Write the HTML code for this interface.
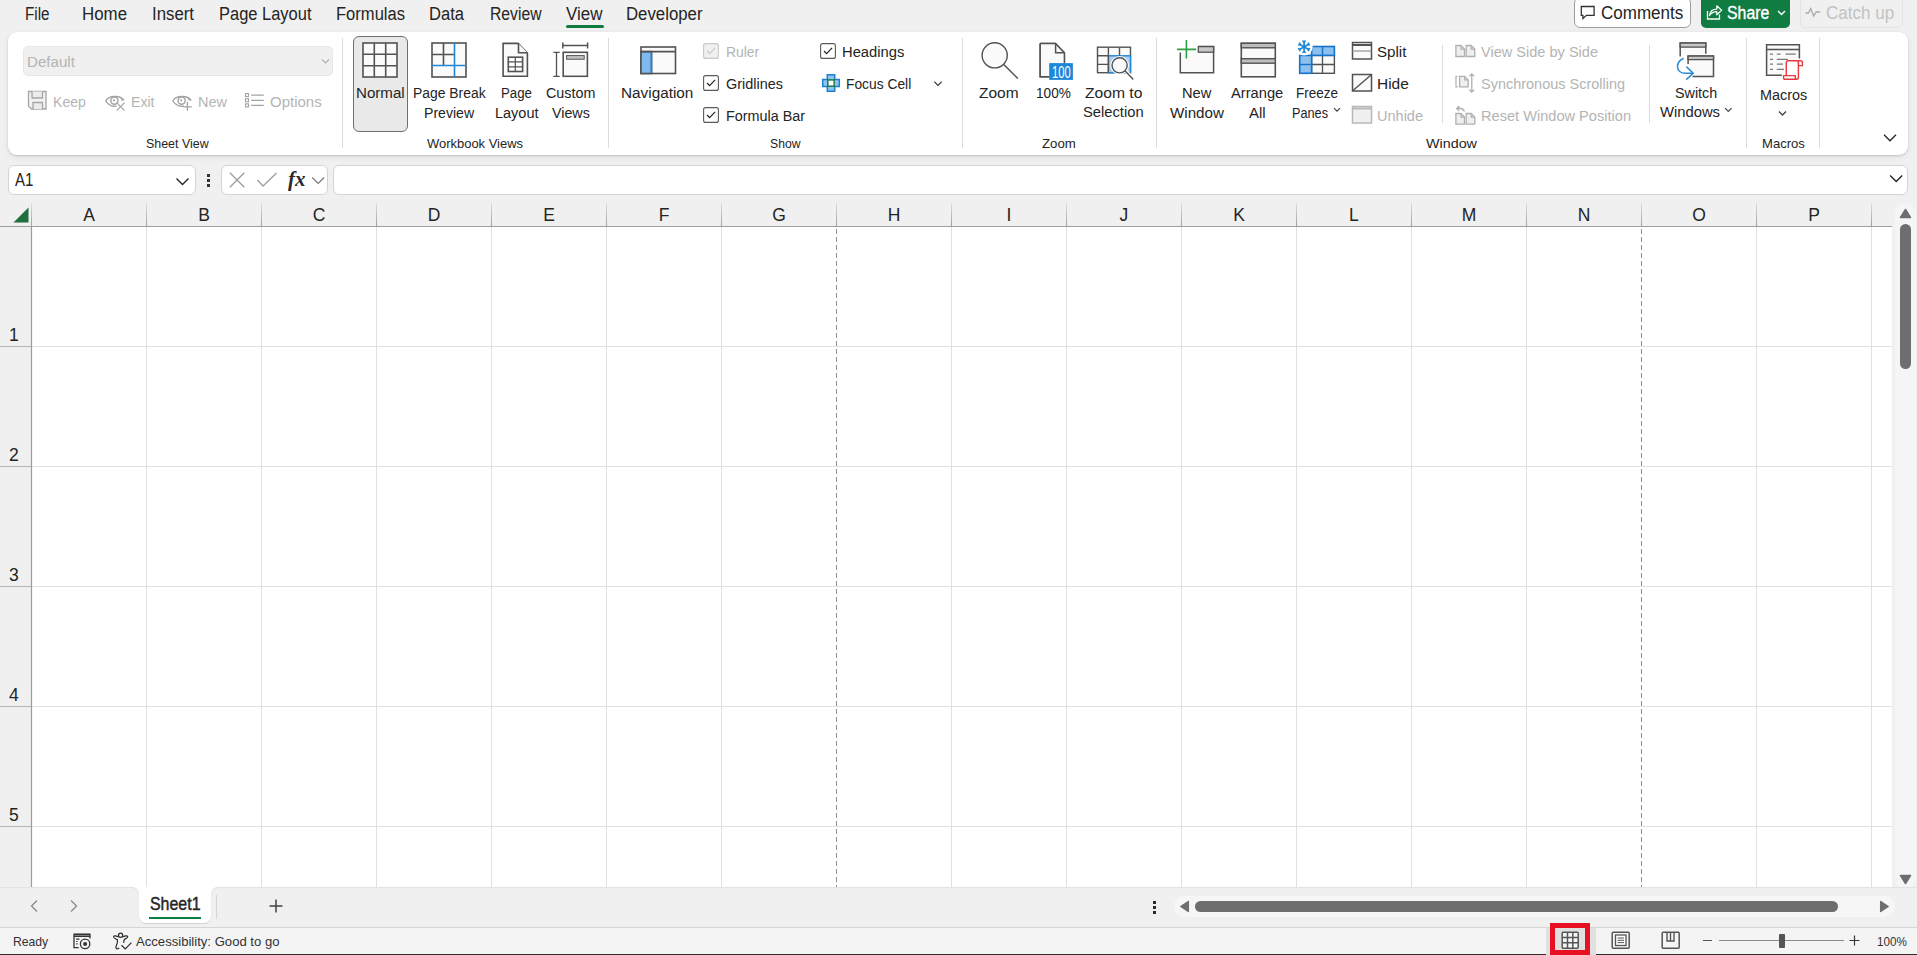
<!DOCTYPE html>
<html><head><meta charset="utf-8"><style>
html,body{margin:0;padding:0}
body{width:1917px;height:955px;overflow:hidden;position:relative;background:#f0f0f0;font-family:"Liberation Sans",sans-serif}
.t{position:absolute;white-space:nowrap;line-height:1}
svg{overflow:visible}
</style></head><body>
<div class="t" style="left:25.00px;top:5px;font-size:18px;color:#242424;font-weight:400;transform:scaleX(0.8448);transform-origin:0 0;">File</div>
<div class="t" style="left:82.40px;top:5px;font-size:18px;color:#242424;font-weight:400;transform:scaleX(0.9375);transform-origin:0 0;">Home</div>
<div class="t" style="left:152.00px;top:5px;font-size:18px;color:#242424;font-weight:400;transform:scaleX(0.9333);transform-origin:0 0;">Insert</div>
<div class="t" style="left:219.00px;top:5px;font-size:18px;color:#242424;font-weight:400;transform:scaleX(0.9149);transform-origin:0 0;">Page Layout</div>
<div class="t" style="left:336.00px;top:5px;font-size:18px;color:#242424;font-weight:400;transform:scaleX(0.9200);transform-origin:0 0;">Formulas</div>
<div class="t" style="left:429.00px;top:5px;font-size:18px;color:#242424;font-weight:400;transform:scaleX(0.9198);transform-origin:0 0;">Data</div>
<div class="t" style="left:489.50px;top:5px;font-size:18px;color:#242424;font-weight:400;transform:scaleX(0.8721);transform-origin:0 0;">Review</div>
<div class="t" style="left:566.00px;top:5px;font-size:18px;color:#242424;font-weight:400;transform:scaleX(0.9419);transform-origin:0 0;">View</div>
<div class="t" style="left:626.00px;top:5px;font-size:18px;color:#242424;font-weight:400;transform:scaleX(0.9324);transform-origin:0 0;">Developer</div>
<div style="position:absolute;left:566px;top:25px;width:38px;height:3px;background:#107c41;border-radius:2px"></div>
<div style="position:absolute;left:1574px;top:-3px;width:117px;height:31px;background:#fff;border:1px solid #9e9e9e;border-radius:6px;box-sizing:border-box"></div>
<svg style="position:absolute;left:1580px;top:5px;" width="16" height="15" viewBox="0 0 16 15"><path d="M1.3 1.5h12.8v8.8h-7.6l-3.6 3.2v-3.2h-1.6z" fill="none" stroke="#333" stroke-width="1.3" stroke-linejoin="miter"/></svg>
<div class="t" style="left:1600.60px;top:5px;font-size:17.5px;color:#242424;font-weight:400;transform:scaleX(0.9728);transform-origin:0 0;">Comments</div>
<div style="position:absolute;left:1701px;top:-6px;width:89px;height:33.6px;background:#107c41;border-radius:5px"></div>
<svg style="position:absolute;left:1706px;top:4px;" width="18" height="18" viewBox="0 0 18 18"><path d="M1.5 7v8h12V10.5" fill="none" stroke="#fff" stroke-width="1.3"/><path d="M3.5 11.5C4 7 7 5.2 10.8 5.2V1.8L15.6 6.3 10.8 10.8V7.6C7.6 7.6 5.2 9 3.5 11.5z" fill="none" stroke="#fff" stroke-width="1.2" stroke-linejoin="round"/></svg>
<div class="t" style="left:1727.20px;top:5px;font-size:17.5px;color:#ffffff;font-weight:400;transform:scaleX(0.9058);transform-origin:0 0;-webkit-text-stroke:0.35px #fff;">Share</div>
<svg style="position:absolute;left:1777px;top:10px;" width="9" height="6" viewBox="0 0 9 6"><path d="M1 1l3.5 3.5L8 1" fill="none" stroke="#fff" stroke-width="1.4"/></svg>
<div style="position:absolute;left:1800px;top:-6px;width:103px;height:33.6px;background:#f0f0f0;border:1px solid #e3e3e3;border-radius:5px;box-sizing:border-box"></div>
<svg style="position:absolute;left:1805px;top:7px;" width="16" height="11" viewBox="0 0 16 11"><path d="M0.5 6h3l2.2-4.5 3 7.5 2.5-4h4" fill="none" stroke="#a8a8a8" stroke-width="1.3"/></svg>
<div class="t" style="left:1826.30px;top:5px;font-size:17.5px;color:#c2c2c2;font-weight:400;transform:scaleX(0.9750);transform-origin:0 0;">Catch up</div>
<div style="position:absolute;left:8px;top:32px;width:1900px;height:123px;background:#fff;border-radius:9px;box-shadow:0 1px 2px rgba(0,0,0,0.14),0 2px 6px rgba(0,0,0,0.07)"></div>
<div style="position:absolute;left:342px;top:38px;width:1px;height:110px;background:#dcdcdc"></div>
<div style="position:absolute;left:608px;top:38px;width:1px;height:110px;background:#dcdcdc"></div>
<div style="position:absolute;left:962px;top:38px;width:1px;height:110px;background:#dcdcdc"></div>
<div style="position:absolute;left:1156px;top:38px;width:1px;height:110px;background:#dcdcdc"></div>
<div style="position:absolute;left:1746px;top:38px;width:1px;height:110px;background:#dcdcdc"></div>
<div style="position:absolute;left:1819px;top:38px;width:1px;height:110px;background:#dcdcdc"></div>
<div style="position:absolute;left:1442px;top:45px;width:1px;height:78px;background:#dcdcdc"></div>
<div style="position:absolute;left:1649px;top:45px;width:1px;height:78px;background:#dcdcdc"></div>
<div class="t" style="left:146.05px;top:137px;font-size:13.5px;color:#242424;font-weight:400;transform:scaleX(0.9207);transform-origin:0 0;">Sheet View</div>
<div class="t" style="left:427.40px;top:137px;font-size:13.5px;color:#242424;font-weight:400;transform:scaleX(0.9595);transform-origin:0 0;">Workbook Views</div>
<div class="t" style="left:770.25px;top:137px;font-size:13.5px;color:#242424;font-weight:400;transform:scaleX(0.9024);transform-origin:0 0;">Show</div>
<div class="t" style="left:1041.70px;top:137px;font-size:13.5px;color:#242424;font-weight:400;transform:scaleX(0.9797);transform-origin:0 0;">Zoom</div>
<div class="t" style="left:1425.50px;top:137px;font-size:13.5px;color:#242424;font-weight:400;transform:scaleX(1.0614);transform-origin:0 0;">Window</div>
<div class="t" style="left:1761.70px;top:137px;font-size:13.5px;color:#242424;font-weight:400;transform:scaleX(0.9672);transform-origin:0 0;">Macros</div>
<div style="position:absolute;left:23px;top:46px;width:310px;height:30px;background:#f0f0f0;border:1px solid #e6e6e6;border-radius:5px;box-sizing:border-box"></div>
<div class="t" style="left:27.00px;top:54px;font-size:15.5px;color:#b4b4b4;font-weight:400;transform:scaleX(0.9756);transform-origin:0 0;">Default</div>
<svg style="position:absolute;left:321px;top:58px;" width="9" height="7" viewBox="0 0 9 7"><path d="M1 1.5l3.5 3.5L8 1.5" fill="none" stroke="#b0b0b0" stroke-width="1.2"/></svg>
<svg style="position:absolute;left:27px;top:90px;" width="22" height="22" viewBox="0 0 22 22"><path d="M1.5 1.5h17.5v17.5h-14.5l-3-3z" fill="#f3f3f3" stroke="#a6a6a6" stroke-width="1.3"/><path d="M5 1.5v6.5h10.5V1.5" fill="#ececec" stroke="#a6a6a6" stroke-width="1.3"/><path d="M6 19V12.5h9.5V19" fill="#ececec" stroke="#a6a6a6" stroke-width="1.3"/></svg>
<div class="t" style="left:53.30px;top:94px;font-size:15.5px;color:#b4b4b4;font-weight:400;transform:scaleX(0.9088);transform-origin:0 0;">Keep</div>
<svg style="position:absolute;left:0;top:0;overflow:visible" width="1" height="1"><g transform="translate(0,0)"><path d="M105.6 101C109 95.3 120.5 95 124 100.5" fill="none" stroke="#a3a3a3" stroke-width="1.4"/><path d="M105.6 101C108.5 105.8 113.5 106.8 116.5 106" fill="none" stroke="#a3a3a3" stroke-width="1.4"/><circle cx="114.4" cy="100.6" r="3.6" fill="none" stroke="#a3a3a3" stroke-width="1.4"/><circle cx="114" cy="100.3" r="1.1" fill="#a3a3a3"/><path d="M121.3 97.6l0.8 3" stroke="#a3a3a3" stroke-width="1.2"/></g><path d="M116.6 102.6l8 8M124.6 102.6l-8 8" stroke="#a3a3a3" stroke-width="1.2"/></svg>
<div class="t" style="left:130.50px;top:94px;font-size:15.5px;color:#b4b4b4;font-weight:400;transform:scaleX(0.9091);transform-origin:0 0;">Exit</div>
<svg style="position:absolute;left:0;top:0;overflow:visible" width="1" height="1"><g transform="translate(67.2,0)"><path d="M105.6 101C109 95.3 120.5 95 124 100.5" fill="none" stroke="#a3a3a3" stroke-width="1.4"/><path d="M105.6 101C108.5 105.8 113.5 106.8 116.5 106" fill="none" stroke="#a3a3a3" stroke-width="1.4"/><circle cx="114.4" cy="100.6" r="3.6" fill="none" stroke="#a3a3a3" stroke-width="1.4"/><circle cx="114" cy="100.3" r="1.1" fill="#a3a3a3"/><path d="M121.3 97.6l0.8 3" stroke="#a3a3a3" stroke-width="1.2"/></g><path d="M187.4 102v8.8M183.2 106.8h8.6" stroke="#a3a3a3" stroke-width="1.3"/></svg>
<div class="t" style="left:197.50px;top:94px;font-size:15.5px;color:#b4b4b4;font-weight:400;transform:scaleX(0.9308);transform-origin:0 0;">New</div>
<svg style="position:absolute;left:0;top:0;overflow:visible" width="1" height="1"><rect x="245.5" y="93.6" width="3" height="3" fill="none" stroke="#a3a3a3" stroke-width="1.1"/><rect x="245.5" y="98.8" width="3" height="3" fill="none" stroke="#a3a3a3" stroke-width="1.1"/><rect x="245.5" y="103.9" width="3" height="3" fill="none" stroke="#a3a3a3" stroke-width="1.1"/><path d="M251.2 95.1h12.6M251.2 100.3h12.6M251.2 105.4h12.6" stroke="#a3a3a3" stroke-width="1.2"/></svg>
<div class="t" style="left:270.00px;top:94px;font-size:15.5px;color:#b4b4b4;font-weight:400;transform:scaleX(0.9682);transform-origin:0 0;">Options</div>
<div style="position:absolute;left:353px;top:36px;width:55px;height:96px;background:#e9e9e9;border:1px solid #6e6e6e;border-radius:6px;box-sizing:border-box"></div>
<svg style="position:absolute;left:360px;top:40px;" width="40" height="40" viewBox="0 0 40 40"><rect x="3" y="3" width="34" height="34" fill="#fafafa" stroke="#525252" stroke-width="1.6"/><path d="M14.3 3V37M3 14.3H37" stroke="#525252" stroke-width="1.6"/><path d="M25.7 3V37M3 25.7H37" stroke="#525252" stroke-width="1.6"/></svg>
<div class="t" style="left:355.65px;top:85px;font-size:15.5px;color:#242424;font-weight:400;transform:scaleX(0.9750);transform-origin:0 0;">Normal</div>
<svg style="position:absolute;left:429px;top:40px;" width="40" height="40" viewBox="0 0 40 40"><rect x="3" y="3" width="34" height="34" fill="#fafafa" stroke="#525252" stroke-width="1.6"/><path d="M14.5 3V25.5M3 14.5H25.5" stroke="#525252" stroke-width="1.6"/><path d="M25.5 3V37M3 25.5H37" stroke="#1f87d6" stroke-width="1.6"/></svg>
<div class="t" style="left:412.65px;top:85px;font-size:15.5px;color:#242424;font-weight:400;transform:scaleX(0.8970);transform-origin:0 0;">Page Break</div>
<div class="t" style="left:423.90px;top:105px;font-size:15.5px;color:#242424;font-weight:400;transform:scaleX(0.9094);transform-origin:0 0;">Preview</div>
<svg style="position:absolute;left:0;top:0;overflow:visible" width="1" height="1"><path d="M503.1 43.4h15l9.3 9.6v23.2H503.1z" fill="#fafafa" stroke="#525252" stroke-width="1.6" stroke-linejoin="miter"/><path d="M518.5 43.4v9.4h8.9" fill="#fafafa" stroke="#525252" stroke-width="1.6"/><rect x="508.3" y="57.2" width="14.3" height="14.3" fill="#fff" stroke="#525252" stroke-width="1.6"/><path d="M515.3 57.2V71.5M508.3 61.9H522.6M508.3 66.8H522.6" stroke="#525252" stroke-width="1.2"/></svg>
<div class="t" style="left:500.55px;top:85px;font-size:15.5px;color:#242424;font-weight:400;transform:scaleX(0.8536);transform-origin:0 0;">Page</div>
<div class="t" style="left:494.55px;top:105px;font-size:15.5px;color:#242424;font-weight:400;transform:scaleX(0.9345);transform-origin:0 0;">Layout</div>
<svg style="position:absolute;left:0;top:0;overflow:visible" width="1" height="1"><path d="M562.8 45.6H587.6M562.8 42.4v6.2M587.6 42.4v6.2" stroke="#525252" stroke-width="1.5"/><path d="M553.4 52.3h6.3M553.4 76.3h6.3M556.5 52.3V76.3" stroke="#525252" stroke-width="1.3"/><rect x="563.2" y="52.3" width="24.2" height="24" fill="#fafafa" stroke="#525252" stroke-width="1.6"/><rect x="566.6" y="55.6" width="17.6" height="3.6" fill="#c4c4c4" stroke="#525252" stroke-width="1"/></svg>
<div class="t" style="left:546.35px;top:85px;font-size:15.5px;color:#242424;font-weight:400;transform:scaleX(0.9232);transform-origin:0 0;">Custom</div>
<div class="t" style="left:552.10px;top:105px;font-size:15.5px;color:#242424;font-weight:400;transform:scaleX(0.9208);transform-origin:0 0;">Views</div>
<svg style="position:absolute;left:638px;top:44px;" width="40" height="32" viewBox="0 0 40 32"><rect x="3" y="3" width="34.5" height="26.5" fill="#fafafa" stroke="#525252" stroke-width="1.6"/><rect x="3" y="7.6" width="10.5" height="21.9" fill="#7fbaf0" stroke="#525252" stroke-width="1.6"/><path d="M13.5 8.5V29" stroke="#1f87d6" stroke-width="1.6"/><path d="M3 7.6h34.5" stroke="#525252" stroke-width="1.6"/></svg>
<div class="t" style="left:621.20px;top:85px;font-size:15.5px;color:#242424;font-weight:400;transform:scaleX(0.9884);transform-origin:0 0;">Navigation</div>
<svg style="position:absolute;left:703px;top:42.8px;" width="16" height="16" viewBox="0 0 16 16"><rect x="0.6" y="0.6" width="14.8" height="14.8" rx="2" fill="#f0f0f0" stroke="#c8c8c8" stroke-width="1.1"/><path d="M4 8l2.6 2.6 5.5-5.8" fill="none" stroke="#c8c8c8" stroke-width="1.2"/></svg>
<div class="t" style="left:725.50px;top:44px;font-size:15.5px;color:#b4b4b4;font-weight:400;transform:scaleX(0.8961);transform-origin:0 0;">Ruler</div>
<svg style="position:absolute;left:703px;top:75.4px;" width="16" height="16" viewBox="0 0 16 16"><rect x="0.6" y="0.6" width="14.8" height="14.8" rx="2" fill="#fff" stroke="#5a5a5a" stroke-width="1.1"/><path d="M4 8l2.6 2.6 5.5-5.8" fill="none" stroke="#242424" stroke-width="1.2"/></svg>
<div class="t" style="left:725.50px;top:76px;font-size:15.5px;color:#242424;font-weight:400;transform:scaleX(0.9305);transform-origin:0 0;">Gridlines</div>
<svg style="position:absolute;left:703px;top:107.2px;" width="16" height="16" viewBox="0 0 16 16"><rect x="0.6" y="0.6" width="14.8" height="14.8" rx="2" fill="#fff" stroke="#5a5a5a" stroke-width="1.1"/><path d="M4 8l2.6 2.6 5.5-5.8" fill="none" stroke="#242424" stroke-width="1.2"/></svg>
<div class="t" style="left:725.50px;top:108px;font-size:15.5px;color:#242424;font-weight:400;transform:scaleX(0.9279);transform-origin:0 0;">Formula Bar</div>
<svg style="position:absolute;left:820px;top:42.8px;" width="16" height="16" viewBox="0 0 16 16"><rect x="0.6" y="0.6" width="14.8" height="14.8" rx="2" fill="#fff" stroke="#5a5a5a" stroke-width="1.1"/><path d="M4 8l2.6 2.6 5.5-5.8" fill="none" stroke="#242424" stroke-width="1.2"/></svg>
<div class="t" style="left:842.30px;top:44px;font-size:15.5px;color:#242424;font-weight:400;transform:scaleX(0.9511);transform-origin:0 0;">Headings</div>
<svg style="position:absolute;left:0;top:0;overflow:visible" width="1" height="1"><path d="M827.3 74.7H834.7V79.4H839.3V86.6H834.7V91.3H827.3V86.6H822.7V79.4H827.3Z" fill="#8fc3f0" stroke="#1f7fd0" stroke-width="1.5" stroke-linejoin="miter"/><rect x="827.8" y="79.9" width="6.4" height="6.3" fill="#fff" stroke="#1e7b45" stroke-width="1.5"/></svg>
<div class="t" style="left:846.00px;top:76px;font-size:15.5px;color:#242424;font-weight:400;transform:scaleX(0.8907);transform-origin:0 0;">Focus Cell</div>
<svg style="position:absolute;left:933px;top:80px;" width="10" height="7" viewBox="0 0 10 7"><path d="M1.3 1.6l3.7 3.7 3.7-3.7" fill="none" stroke="#333" stroke-width="1.2"/></svg>
<svg style="position:absolute;left:0;top:0;overflow:visible" width="1" height="1"><circle cx="994.7" cy="55.3" r="12.6" fill="#fafafa" stroke="#525252" stroke-width="1.4"/><path d="M1003.8 64.5L1017.8 78.5" stroke="#525252" stroke-width="1.5"/></svg>
<div class="t" style="left:978.95px;top:85px;font-size:15.5px;color:#242424;font-weight:400;transform:scaleX(0.9975);transform-origin:0 0;">Zoom</div>
<svg style="position:absolute;left:0;top:0;overflow:visible" width="1" height="1"><path d="M1040.2 43.4h15.2l9 9.4v10.5M1049.2 76.7h-9V43.4" fill="#fafafa" stroke="#525252" stroke-width="1.5"/><path d="M1040.2 43.4h15.2l9 9.4V63.2H1049.2V76.7h-9z" fill="#fafafa"/><path d="M1040.2 43.4h15.2l9 9.4v10.5M1049.2 76.7h-9V43.4" fill="none" stroke="#525252" stroke-width="1.5"/><path d="M1055.6 43.4v9.4h8.8" fill="none" stroke="#525252" stroke-width="1.5"/><rect x="1049.2" y="63.1" width="23.7" height="16.8" fill="#1e88d8"/><text x="1052" y="77.7" font-family="Liberation Sans" font-size="16.5" fill="#fff" textLength="18.7" lengthAdjust="spacingAndGlyphs">100</text></svg>
<div class="t" style="left:1036.20px;top:85px;font-size:15.5px;color:#242424;font-weight:400;transform:scaleX(0.8777);transform-origin:0 0;">100%</div>
<svg style="position:absolute;left:0;top:0;overflow:visible" width="1" height="1"><rect x="1097.5" y="47.2" width="33" height="25.5" fill="#fafafa" stroke="#525252" stroke-width="1.4"/><rect x="1108.4" y="55.8" width="22.1" height="16.9" fill="#a9d1f5" stroke="#1f87d6" stroke-width="1.4"/><path d="M1108.4 47.2v25.5M1119.5 47.2v8.6M1097.5 55.8h10.9M1097.5 64.4h10.9" stroke="#525252" stroke-width="1.4"/><circle cx="1119.6" cy="65.3" r="9.3" fill="#fff"/><path d="M1126 71.2l7.6 8.3" stroke="#fff" stroke-width="3.5"/><circle cx="1119.6" cy="65.3" r="7.6" fill="#fafafa" stroke="#525252" stroke-width="1.4"/><path d="M1125 70.8l8.3 8.7" stroke="#525252" stroke-width="1.4"/></svg>
<div class="t" style="left:1085.00px;top:85px;font-size:15.5px;color:#242424;font-weight:400;transform:scaleX(1.0097);transform-origin:0 0;">Zoom to</div>
<div class="t" style="left:1083.20px;top:104px;font-size:15.5px;color:#242424;font-weight:400;transform:scaleX(0.9506);transform-origin:0 0;">Selection</div>
<svg style="position:absolute;left:0;top:0;overflow:visible" width="1" height="1"><path d="M1180.3 52.4V72.7H1213.6V46.6H1198.3" fill="#fafafa" stroke="#525252" stroke-width="1.5"/><path d="M1180.3 52.4V46.6H1198.3" fill="none" stroke="none"/><rect x="1198.3" y="46.6" width="15.3" height="5.6" fill="#c8c8c8" stroke="#525252" stroke-width="1.3"/><path d="M1186.4 40.1v18.5M1177.1 49.4h18.9" stroke="#2ca046" stroke-width="1.6"/></svg>
<div class="t" style="left:1182.45px;top:85px;font-size:15.5px;color:#242424;font-weight:400;transform:scaleX(0.9436);transform-origin:0 0;">New</div>
<div class="t" style="left:1169.60px;top:105px;font-size:15.5px;color:#242424;font-weight:400;transform:scaleX(0.9783);transform-origin:0 0;">Window</div>
<svg style="position:absolute;left:1238px;top:40px;" width="40" height="40" viewBox="0 0 40 40"><rect x="3.3" y="3.3" width="34" height="33.5" fill="#fafafa" stroke="#525252" stroke-width="1.6"/><rect x="3.3" y="3.3" width="34" height="4.5" fill="#bdbdbd" stroke="#525252" stroke-width="1.4"/><path d="M3.3 18.7h34" stroke="#525252" stroke-width="1.6"/><rect x="3.3" y="18.7" width="34" height="4.5" fill="#bdbdbd" stroke="#525252" stroke-width="1.4"/></svg>
<div class="t" style="left:1231.05px;top:85px;font-size:15.5px;color:#242424;font-weight:400;transform:scaleX(0.9483);transform-origin:0 0;">Arrange</div>
<div class="t" style="left:1249.45px;top:105px;font-size:15.5px;color:#242424;font-weight:400;transform:scaleX(0.9681);transform-origin:0 0;">All</div>
<svg style="position:absolute;left:0;top:0;overflow:visible" width="1" height="1"><rect x="1311.6" y="55.4" width="22.8" height="17.9" fill="#fafafa" stroke="#525252" stroke-width="1.4"/><path d="M1322.5 55.4V73.3M1311.6 64.5H1334.4" stroke="#525252" stroke-width="1.3"/><rect x="1311.6" y="46.5" width="22.8" height="8.9" fill="#8cc0ee" stroke="#1474c8" stroke-width="1.6"/><path d="M1322.5 46.5V55.4" stroke="#1474c8" stroke-width="1.4"/><rect x="1299.7" y="55.4" width="11.9" height="17.9" fill="#8cc0ee" stroke="#1474c8" stroke-width="1.6"/><path d="M1299.7 64.5H1311.6" stroke="#1474c8" stroke-width="1.4"/><circle cx="1304.1" cy="46.8" r="8.6" fill="#fff"/><path d="M1304.10 40.50L1304.10 53.10" stroke="#1f87d6" stroke-width="1.7"/><path d="M1298.64 43.65L1309.56 49.95" stroke="#1f87d6" stroke-width="1.7"/><path d="M1309.56 43.65L1298.64 49.95" stroke="#1f87d6" stroke-width="1.7"/><path d="M1304.10 51.40L1305.79 52.81" stroke="#1f87d6" stroke-width="1.3"/><path d="M1304.10 51.40L1302.41 52.81" stroke="#1f87d6" stroke-width="1.3"/><path d="M1300.12 49.10L1299.73 51.27" stroke="#1f87d6" stroke-width="1.3"/><path d="M1300.12 49.10L1298.05 48.35" stroke="#1f87d6" stroke-width="1.3"/><path d="M1300.12 44.50L1298.05 45.25" stroke="#1f87d6" stroke-width="1.3"/><path d="M1300.12 44.50L1299.73 42.33" stroke="#1f87d6" stroke-width="1.3"/><path d="M1304.10 42.20L1302.41 40.79" stroke="#1f87d6" stroke-width="1.3"/><path d="M1304.10 42.20L1305.79 40.79" stroke="#1f87d6" stroke-width="1.3"/><path d="M1308.08 44.50L1308.47 42.33" stroke="#1f87d6" stroke-width="1.3"/><path d="M1308.08 44.50L1310.15 45.25" stroke="#1f87d6" stroke-width="1.3"/><path d="M1308.08 49.10L1310.15 48.35" stroke="#1f87d6" stroke-width="1.3"/><path d="M1308.08 49.10L1308.47 51.27" stroke="#1f87d6" stroke-width="1.3"/></svg>
<div class="t" style="left:1295.50px;top:85px;font-size:15.5px;color:#242424;font-weight:400;transform:scaleX(0.8705);transform-origin:0 0;">Freeze</div>
<div class="t" style="left:1291.60px;top:105px;font-size:15.5px;color:#242424;font-weight:400;transform:scaleX(0.8191);transform-origin:0 0;">Panes</div>
<svg style="position:absolute;left:1333px;top:107px;" width="8" height="6" viewBox="0 0 8 6"><path d="M1 1.2l3 3 3-3" fill="none" stroke="#424242" stroke-width="1.2"/></svg>
<svg style="position:absolute;left:1351px;top:41px;" width="22" height="20" viewBox="0 0 22 20"><rect x="1.5" y="1.5" width="19" height="16.5" fill="#fafafa" stroke="#525252" stroke-width="1.5"/><path d="M1.5 4h19" stroke="#525252" stroke-width="2"/><path d="M1.5 10h19" stroke="#9a9a9a" stroke-width="1.3"/></svg>
<div class="t" style="left:1377.20px;top:44px;font-size:15.5px;color:#242424;font-weight:400;transform:scaleX(0.9751);transform-origin:0 0;">Split</div>
<svg style="position:absolute;left:1351px;top:73px;" width="22" height="20" viewBox="0 0 22 20"><rect x="1.5" y="1.5" width="19" height="16.5" fill="#fafafa" stroke="#525252" stroke-width="1.5"/><path d="M2 17.5L20 2" stroke="#525252" stroke-width="1.4"/></svg>
<div class="t" style="left:1377.20px;top:76px;font-size:15.5px;color:#242424;font-weight:400;transform:scaleX(0.9969);transform-origin:0 0;">Hide</div>
<svg style="position:absolute;left:1351px;top:105px;" width="22" height="20" viewBox="0 0 22 20"><rect x="1.5" y="1.5" width="19" height="16.5" fill="#f0f0f0" stroke="#b8b8b8" stroke-width="1.5"/><path d="M1.5 3.5h19" stroke="#b8b8b8" stroke-width="2"/></svg>
<div class="t" style="left:1377.20px;top:108px;font-size:15.5px;color:#b4b4b4;font-weight:400;transform:scaleX(0.9369);transform-origin:0 0;">Unhide</div>
<svg style="position:absolute;left:0;top:0;overflow:visible" width="1" height="1"><path d="M1455.9 45.5h5.0l3.6 3.6V56.5H1455.9z" fill="#efefef" stroke="#b0b0b0" stroke-width="1.3" stroke-linejoin="miter"/><path d="M1460.9 45.5v3.6h3.6" fill="none" stroke="#b0b0b0" stroke-width="1.1"/><path d="M1466.2 45.5h5.0l3.6 3.6V56.5H1466.2z" fill="#efefef" stroke="#b0b0b0" stroke-width="1.3" stroke-linejoin="miter"/><path d="M1471.2 45.5v3.6h3.6" fill="none" stroke="#b0b0b0" stroke-width="1.1"/></svg>
<div class="t" style="left:1480.60px;top:44px;font-size:15.5px;color:#b4b4b4;font-weight:400;transform:scaleX(0.9386);transform-origin:0 0;">View Side by Side</div>
<svg style="position:absolute;left:0;top:0;overflow:visible" width="1" height="1"><path d="M1457.6 76.3h-1.6v10.6h1.6" fill="none" stroke="#b0b0b0" stroke-width="1.2"/><path d="M1459.6 76.3h5.0l3.6 3.6V86.89999999999999H1459.6z" fill="#efefef" stroke="#b0b0b0" stroke-width="1.3" stroke-linejoin="miter"/><path d="M1464.6 76.3v3.6h3.6" fill="none" stroke="#b0b0b0" stroke-width="1.1"/><path d="M1471.8 73.8V92.2M1469.4 76.2l2.4-2.4 2.4 2.4M1469.4 89.8l2.4 2.4 2.4-2.4" fill="none" stroke="#b0b0b0" stroke-width="1.3"/></svg>
<div class="t" style="left:1480.60px;top:76px;font-size:15.5px;color:#b4b4b4;font-weight:400;transform:scaleX(0.9339);transform-origin:0 0;">Synchronous Scrolling</div>
<svg style="position:absolute;left:0;top:0;overflow:visible" width="1" height="1"><path d="M1464.6 111.3C1463 108.6 1460.2 107.8 1457 108.5M1459.3 106l-2.6 2.5 2.6 2.4" fill="none" stroke="#b0b0b0" stroke-width="1.3"/><path d="M1455.9 113.5h5.0l3.6 3.6V124.1H1455.9z" fill="#efefef" stroke="#b0b0b0" stroke-width="1.3" stroke-linejoin="miter"/><path d="M1460.9 113.5v3.6h3.6" fill="none" stroke="#b0b0b0" stroke-width="1.1"/><path d="M1466.2 113.5h5.0l3.6 3.6V124.1H1466.2z" fill="#efefef" stroke="#b0b0b0" stroke-width="1.3" stroke-linejoin="miter"/><path d="M1471.2 113.5v3.6h3.6" fill="none" stroke="#b0b0b0" stroke-width="1.1"/></svg>
<div class="t" style="left:1480.60px;top:108px;font-size:15.5px;color:#b4b4b4;font-weight:400;transform:scaleX(0.9413);transform-origin:0 0;">Reset Window Position</div>
<svg style="position:absolute;left:0;top:0;overflow:visible" width="1" height="1"><path d="M1680.2 56.6V43.1H1705.8V53.7" fill="#fafafa" stroke="#525252" stroke-width="1.5"/><rect x="1680.2" y="43.1" width="25.6" height="4" fill="#c8c8c8" stroke="#525252" stroke-width="1.3"/><circle cx="1684" cy="66" r="7.6" fill="#fff"/><path d="M1688.1 64V56.1H1713.5V76.4H1692.6" fill="#fafafa" stroke="#525252" stroke-width="1.5"/><rect x="1688.1" y="56.1" width="25.4" height="3.5" fill="#c8c8c8" stroke="#525252" stroke-width="1.3"/><path d="M1683.6 58.3C1679.8 60 1677.5 63 1677.5 66.5C1677.5 70.6 1680.8 73.3 1685.5 73.3H1693" fill="none" stroke="#2a8ad4" stroke-width="1.5"/><path d="M1686.4 66.6L1693.2 73.2L1686.2 79.6" fill="none" stroke="#2a8ad4" stroke-width="1.5"/></svg>
<div class="t" style="left:1675.40px;top:85px;font-size:15.5px;color:#242424;font-weight:400;transform:scaleX(0.9244);transform-origin:0 0;">Switch</div>
<div class="t" style="left:1659.50px;top:104px;font-size:15.5px;color:#242424;font-weight:400;transform:scaleX(0.9539);transform-origin:0 0;">Windows</div>
<svg style="position:absolute;left:1724px;top:107px;" width="9" height="6" viewBox="0 0 9 6"><path d="M1 1.2l3.3 3.3 3.3-3.3" fill="none" stroke="#424242" stroke-width="1.2"/></svg>
<svg style="position:absolute;left:0;top:0;overflow:visible" width="1" height="1"><path d="M1781.8 75.2H1766.6V44.8H1799.4V58.5" fill="#fafafa" stroke="#525252" stroke-width="1.5"/><path d="M1766.6 49.5H1799.4" stroke="#525252" stroke-width="1.4"/><path d="M1770 54.2h3M1776.8 54.2h3.8M1785.5 54.2h10.2M1770 59.3h3M1776.8 59.3h11.1M1770 64.2h3M1776.8 64.2h6.2M1770 69.3h3M1776.8 69.3h7.2" stroke="#7a7a7a" stroke-width="1.2"/><path d="M1797.4 60.7H1800.6Q1802.4 60.7 1802.4 62.6V65.6H1798.4" fill="#fff" stroke="#e8383d" stroke-width="1.4"/><path d="M1786.3 75.6V62.7Q1786.3 60.7 1788.4 60.7H1796.3Q1798.4 60.7 1798.4 62.7V77.2Q1798.4 79.3 1796.3 79.3H1785.3Q1783.5 79.3 1783.5 77.4V75.6H1795.3V79.3" fill="#fff" stroke="#e8383d" stroke-width="1.4" stroke-linejoin="round"/></svg>
<div class="t" style="left:1759.70px;top:87px;font-size:15.5px;color:#242424;font-weight:400;transform:scaleX(0.9291);transform-origin:0 0;">Macros</div>
<svg style="position:absolute;left:1778px;top:110px;" width="9" height="7" viewBox="0 0 9 7"><path d="M1 1.5l3.5 3.5 3.5-3.5" fill="none" stroke="#424242" stroke-width="1.3"/></svg>
<svg style="position:absolute;left:1883px;top:133px;" width="14" height="9" viewBox="0 0 14 9"><path d="M1 1.8l6 6 6-6" fill="none" stroke="#262626" stroke-width="1.3"/></svg>
<div style="position:absolute;left:8px;top:165px;width:188px;height:30px;background:#fff;border:1px solid #d4d4d4;border-radius:6px;box-sizing:border-box"></div>
<div class="t" style="left:15.00px;top:172px;font-size:17.5px;color:#242424;font-weight:400;transform:scaleX(0.8598);transform-origin:0 0;">A1</div>
<svg style="position:absolute;left:175px;top:177px;" width="15" height="10" viewBox="0 0 15 10"><path d="M1.5 1.5l6 6 6-6" fill="none" stroke="#242424" stroke-width="1.4"/></svg>
<div style="position:absolute;left:207px;top:174px;width:3px;height:3px;background:#333"></div>
<div style="position:absolute;left:207px;top:179px;width:3px;height:3px;background:#333"></div>
<div style="position:absolute;left:207px;top:184px;width:3px;height:3px;background:#333"></div>
<div style="position:absolute;left:221px;top:165px;width:107px;height:30px;background:#fff;border:1px solid #d4d4d4;border-radius:6px;box-sizing:border-box"></div>
<svg style="position:absolute;left:228px;top:171px;" width="18" height="18" viewBox="0 0 18 18"><path d="M1.8 1.8l14.5 14.5M16.3 1.8L1.8 16.3" stroke="#9e9e9e" stroke-width="1.3"/></svg>
<svg style="position:absolute;left:256px;top:171px;" width="22" height="17" viewBox="0 0 22 17"><path d="M1.5 9l5.5 6L20.5 2" fill="none" stroke="#9e9e9e" stroke-width="1.3"/></svg>
<div class="t" style="left:288px;top:166px;font-family:'Liberation Serif',serif;font-style:italic;font-weight:700;font-size:22px;line-height:25px;color:#2a2a2a;transform:scaleX(0.95);transform-origin:0 0">fx</div>
<svg style="position:absolute;left:311px;top:176px;" width="15" height="9" viewBox="0 0 15 9"><path d="M1.2 1.5l6 6 6-6" fill="none" stroke="#7a7a7a" stroke-width="1.2"/></svg>
<div style="position:absolute;left:333px;top:165px;width:1575px;height:30px;background:#fff;border:1px solid #d4d4d4;border-radius:6px;box-sizing:border-box"></div>
<svg style="position:absolute;left:1889px;top:174px;" width="15" height="10" viewBox="0 0 15 10"><path d="M1.2 1.5l6 6 6-6" fill="none" stroke="#242424" stroke-width="1.4"/></svg>
<div style="position:absolute;left:31px;top:226px;width:1861px;height:661px;background:#fff"></div>
<svg style="position:absolute;left:0px;top:0px;pointer-events:none" width="1917" height="955" viewBox="0 0 1917 955"><path d="M146.5 226V887" stroke="#e1e1e1" stroke-width="1"/><path d="M261.5 226V887" stroke="#e1e1e1" stroke-width="1"/><path d="M376.5 226V887" stroke="#e1e1e1" stroke-width="1"/><path d="M491.5 226V887" stroke="#e1e1e1" stroke-width="1"/><path d="M606.5 226V887" stroke="#e1e1e1" stroke-width="1"/><path d="M721.5 226V887" stroke="#e1e1e1" stroke-width="1"/><path d="M951.5 226V887" stroke="#e1e1e1" stroke-width="1"/><path d="M1066.5 226V887" stroke="#e1e1e1" stroke-width="1"/><path d="M1181.5 226V887" stroke="#e1e1e1" stroke-width="1"/><path d="M1296.5 226V887" stroke="#e1e1e1" stroke-width="1"/><path d="M1411.5 226V887" stroke="#e1e1e1" stroke-width="1"/><path d="M1526.5 226V887" stroke="#e1e1e1" stroke-width="1"/><path d="M1756.5 226V887" stroke="#e1e1e1" stroke-width="1"/><path d="M1871.5 226V887" stroke="#e1e1e1" stroke-width="1"/><path d="M31 346.5H1892" stroke="#e1e1e1" stroke-width="1"/><path d="M31 466.5H1892" stroke="#e1e1e1" stroke-width="1"/><path d="M31 586.5H1892" stroke="#e1e1e1" stroke-width="1"/><path d="M31 706.5H1892" stroke="#e1e1e1" stroke-width="1"/><path d="M31 826.5H1892" stroke="#e1e1e1" stroke-width="1"/><path d="M836.5 229V887" stroke="#8e8e8e" stroke-width="1" stroke-dasharray="5 3"/><path d="M1641.5 229V887" stroke="#8e8e8e" stroke-width="1" stroke-dasharray="5 3"/></svg>
<div style="position:absolute;left:0px;top:203px;width:1892px;height:23px;background:#f0f0f0"></div>
<div style="position:absolute;left:0px;top:226px;width:31px;height:661px;background:#f0f0f0"></div>
<svg style="position:absolute;left:0px;top:0px;pointer-events:none" width="1917" height="955" viewBox="0 0 1917 955"><defs><linearGradient id="hg" gradientUnits="userSpaceOnUse" x1="0" y1="203" x2="0" y2="226"><stop offset="0" stop-color="#dedede"/><stop offset="1" stop-color="#a0a0a0"/></linearGradient></defs><path d="M31.5 203V226" stroke="url(#hg)" stroke-width="1"/><path d="M146.5 203V226" stroke="url(#hg)" stroke-width="1"/><path d="M261.5 203V226" stroke="url(#hg)" stroke-width="1"/><path d="M376.5 203V226" stroke="url(#hg)" stroke-width="1"/><path d="M491.5 203V226" stroke="url(#hg)" stroke-width="1"/><path d="M606.5 203V226" stroke="url(#hg)" stroke-width="1"/><path d="M721.5 203V226" stroke="url(#hg)" stroke-width="1"/><path d="M836.5 203V226" stroke="url(#hg)" stroke-width="1"/><path d="M951.5 203V226" stroke="url(#hg)" stroke-width="1"/><path d="M1066.5 203V226" stroke="url(#hg)" stroke-width="1"/><path d="M1181.5 203V226" stroke="url(#hg)" stroke-width="1"/><path d="M1296.5 203V226" stroke="url(#hg)" stroke-width="1"/><path d="M1411.5 203V226" stroke="url(#hg)" stroke-width="1"/><path d="M1526.5 203V226" stroke="url(#hg)" stroke-width="1"/><path d="M1641.5 203V226" stroke="url(#hg)" stroke-width="1"/><path d="M1756.5 203V226" stroke="url(#hg)" stroke-width="1"/><path d="M1871.5 203V226" stroke="url(#hg)" stroke-width="1"/><path d="M0 226.5H1892" stroke="#9e9e9e" stroke-width="1.2"/><path d="M31.5 226V887" stroke="#9e9e9e" stroke-width="1.2"/><path d="M0 346.5H31" stroke="#b4b4b4" stroke-width="1"/><path d="M0 466.5H31" stroke="#b4b4b4" stroke-width="1"/><path d="M0 586.5H31" stroke="#b4b4b4" stroke-width="1"/><path d="M0 706.5H31" stroke="#b4b4b4" stroke-width="1"/><path d="M0 826.5H31" stroke="#b4b4b4" stroke-width="1"/></svg>
<svg style="position:absolute;left:12px;top:206px;" width="18" height="18" viewBox="0 0 18 18"><path d="M16.5 1.5V16.5H1.5z" fill="#1f6f3f"/></svg>
<div class="t" style="left:83.17px;top:207px;font-size:17.5px;color:#242424;font-weight:400;">A</div>
<div class="t" style="left:198.18px;top:207px;font-size:17.5px;color:#242424;font-weight:400;">B</div>
<div class="t" style="left:312.68px;top:207px;font-size:17.5px;color:#242424;font-weight:400;">C</div>
<div class="t" style="left:427.68px;top:207px;font-size:17.5px;color:#242424;font-weight:400;">D</div>
<div class="t" style="left:543.17px;top:207px;font-size:17.5px;color:#242424;font-weight:400;">E</div>
<div class="t" style="left:658.65px;top:207px;font-size:17.5px;color:#242424;font-weight:400;">F</div>
<div class="t" style="left:772.20px;top:207px;font-size:17.5px;color:#242424;font-weight:400;">G</div>
<div class="t" style="left:887.67px;top:207px;font-size:17.5px;color:#242424;font-weight:400;">H</div>
<div class="t" style="left:1006.58px;top:207px;font-size:17.5px;color:#242424;font-weight:400;">I</div>
<div class="t" style="left:1119.62px;top:207px;font-size:17.5px;color:#242424;font-weight:400;">J</div>
<div class="t" style="left:1233.17px;top:207px;font-size:17.5px;color:#242424;font-weight:400;">K</div>
<div class="t" style="left:1349.12px;top:207px;font-size:17.5px;color:#242424;font-weight:400;">L</div>
<div class="t" style="left:1461.70px;top:207px;font-size:17.5px;color:#242424;font-weight:400;">M</div>
<div class="t" style="left:1577.67px;top:207px;font-size:17.5px;color:#242424;font-weight:400;">N</div>
<div class="t" style="left:1692.20px;top:207px;font-size:17.5px;color:#242424;font-weight:400;">O</div>
<div class="t" style="left:1808.17px;top:207px;font-size:17.5px;color:#242424;font-weight:400;">P</div>
<div class="t" style="left:9.12px;top:327px;font-size:17.5px;color:#242424;font-weight:400;">1</div>
<div class="t" style="left:9.12px;top:447px;font-size:17.5px;color:#242424;font-weight:400;">2</div>
<div class="t" style="left:9.12px;top:567px;font-size:17.5px;color:#242424;font-weight:400;">3</div>
<div class="t" style="left:9.12px;top:687px;font-size:17.5px;color:#242424;font-weight:400;">4</div>
<div class="t" style="left:9.12px;top:807px;font-size:17.5px;color:#242424;font-weight:400;">5</div>
<div style="position:absolute;left:1895px;top:203px;width:21px;height:686px;background:#f5f5f5;border-radius:10px"></div>
<svg style="position:absolute;left:1899px;top:208px;" width="13" height="11" viewBox="0 0 13 11"><path d="M6.5 1.5L11.5 9.5H1.5z" fill="#6e6e6e" stroke="#6e6e6e" stroke-width="1.5" stroke-linejoin="round"/></svg>
<div style="position:absolute;left:1900px;top:224px;width:11px;height:145px;background:#6e6e6e;border-radius:6px"></div>
<svg style="position:absolute;left:1899px;top:874px;" width="13" height="11" viewBox="0 0 13 11"><path d="M6.5 9.5L11.5 1.5H1.5z" fill="#6e6e6e" stroke="#6e6e6e" stroke-width="1.5" stroke-linejoin="round"/></svg>
<div style="position:absolute;left:0px;top:887px;width:1917px;height:12px;background:#fff"></div>
<div style="position:absolute;left:0px;top:899px;width:1917px;height:28px;background:#f0f0f0"></div>
<div style="position:absolute;left:0px;top:887px;width:139px;height:40px;background:#f0f0f0;border-top-right-radius:7px;box-shadow:inset 0 1px 0 #e2e2e2"></div>
<div style="position:absolute;left:211px;top:887px;width:1706px;height:40px;background:#f0f0f0;border-top-left-radius:7px;box-shadow:inset 0 1px 0 #e2e2e2"></div>
<div style="position:absolute;left:139px;top:887px;width:72px;height:36px;background:#fff;border-radius:0 0 7px 7px;box-shadow:0 1px 1px rgba(0,0,0,0.12)"></div>
<div class="t" style="left:149.50px;top:895px;font-size:18.5px;color:#242424;font-weight:400;transform:scaleX(0.8610);transform-origin:0 0;-webkit-text-stroke:0.45px #242424;">Sheet1</div>
<div style="position:absolute;left:149px;top:917px;width:52px;height:2px;background:#107c41"></div>
<div style="position:absolute;left:216px;top:895px;width:1px;height:24px;background:#d6d6d6"></div>
<svg style="position:absolute;left:28px;top:899px;" width="12" height="14" viewBox="0 0 12 14"><path d="M9 1.5L3.5 7 9 12.5" fill="none" stroke="#8a8a8a" stroke-width="1.3"/></svg>
<svg style="position:absolute;left:68px;top:899px;" width="12" height="14" viewBox="0 0 12 14"><path d="M3 1.5L8.5 7 3 12.5" fill="none" stroke="#8a8a8a" stroke-width="1.3"/></svg>
<svg style="position:absolute;left:268px;top:898px;" width="16" height="16" viewBox="0 0 16 16"><path d="M8 1.5v13M1.5 8h13" stroke="#424242" stroke-width="1.5"/></svg>
<div style="position:absolute;left:1152.5px;top:901px;width:3px;height:3px;background:#2a2a2a"></div>
<div style="position:absolute;left:1152.5px;top:906px;width:3px;height:3px;background:#2a2a2a"></div>
<div style="position:absolute;left:1152.5px;top:911px;width:3px;height:3px;background:#2a2a2a"></div>
<div style="position:absolute;left:1174px;top:896px;width:721px;height:21px;background:#f6f6f6;border-radius:10px"></div>
<svg style="position:absolute;left:1179px;top:900px;" width="11" height="13" viewBox="0 0 11 13"><path d="M9.3 1.5V11.5L1.8 6.5z" fill="#6e6e6e" stroke="#6e6e6e" stroke-width="1.5" stroke-linejoin="round"/></svg>
<div style="position:absolute;left:1195px;top:901px;width:643px;height:11px;background:#6e6e6e;border-radius:6px"></div>
<svg style="position:absolute;left:1879px;top:900px;" width="11" height="13" viewBox="0 0 11 13"><path d="M1.7 1.5V11.5L9.2 6.5z" fill="#6e6e6e" stroke="#6e6e6e" stroke-width="1.5" stroke-linejoin="round"/></svg>
<div style="position:absolute;left:0px;top:927px;width:1917px;height:28px;background:#f4f4f4"></div>
<div style="position:absolute;left:0px;top:927px;width:1917px;height:1px;background:#d6d6d6"></div>
<div style="position:absolute;left:0px;top:954px;width:1917px;height:1px;background:#2b2b2b"></div>
<div class="t" style="left:12.50px;top:935px;font-size:13px;color:#333333;font-weight:400;transform:scaleX(0.9362);transform-origin:0 0;">Ready</div>
<svg style="position:absolute;left:0;top:0;overflow:visible" width="1" height="1"><path d="M78.7 947.7H74V934.4H90V938.4" fill="none" stroke="#333" stroke-width="1.3"/><path d="M74 934.6H90" stroke="#333" stroke-width="2"/><path d="M74 936.5H90" stroke="#333" stroke-width="1"/><path d="M76.2 939.1h3.2M76.2 941.5h1.4M76.2 943.9h1.4" stroke="#333" stroke-width="1.1"/><circle cx="85.1" cy="943.9" r="4.7" fill="#f4f4f4" stroke="#333" stroke-width="1.3"/><circle cx="85.1" cy="943.9" r="2" fill="#333"/></svg>
<svg style="position:absolute;left:0;top:0;overflow:visible" width="1" height="1"><circle cx="120.6" cy="935.3" r="2.1" fill="none" stroke="#2a2a2a" stroke-width="1.2"/><path d="M118.3 936.8C116.3 936 113.7 935.2 113.6 936.9C113.5 938.4 116.3 938.9 117.4 939.8C117.8 942.3 117 944.4 116.1 946.3C115.4 948.2 116.4 949.6 118.9 948.2" fill="none" stroke="#2a2a2a" stroke-width="1.2" stroke-linecap="round"/><path d="M122.9 936.8C124.9 936 127.6 935.2 127.7 936.9C127.8 938.3 124.6 938.4 124 940.2L123.8 942.4" fill="none" stroke="#2a2a2a" stroke-width="1.2" stroke-linecap="round"/><path d="M121.5 945.2L125.3 948.9L131.4 942.6" fill="none" stroke="#2a2a2a" stroke-width="1.2"/></svg>
<div class="t" style="left:135.80px;top:935px;font-size:13px;color:#333333;font-weight:400;transform:scaleX(1.0081);transform-origin:0 0;">Accessibility: Good to go</div>
<div style="position:absolute;left:1546px;top:928px;width:50px;height:27px;background:#e0e0e0"></div>
<div style="position:absolute;left:1550px;top:923px;width:40px;height:32px;border:5px solid #e81123;box-sizing:border-box"></div>
<svg style="position:absolute;left:1561px;top:931px;" width="19" height="19" viewBox="0 0 19 19"><rect x="1.2" y="1.2" width="16" height="16" rx="1" fill="#f6f6f6" stroke="#555" stroke-width="1.5"/><path d="M6.5 1.2v16M11.8 1.2v16M1.2 6.5h16M1.2 11.8h16" stroke="#555" stroke-width="1.5"/></svg>
<svg style="position:absolute;left:1611px;top:931px;" width="20" height="19" viewBox="0 0 20 19"><rect x="1.2" y="1.2" width="17" height="16" rx="1" fill="#f6f6f6" stroke="#555" stroke-width="1.5"/><rect x="4.5" y="4" width="10.5" height="10.5" fill="#fff" stroke="#555" stroke-width="1.3"/><path d="M6.5 7h6.5M6.5 9.3h6.5M6.5 11.6h6.5" stroke="#555" stroke-width="1"/></svg>
<svg style="position:absolute;left:1661px;top:931px;" width="20" height="19" viewBox="0 0 20 19"><rect x="1.2" y="1.2" width="17" height="16" rx="1" fill="#f6f6f6" stroke="#555" stroke-width="1.5"/><path d="M6 1.2v8.8h7V1.2M9.5 1.2V10" fill="none" stroke="#555" stroke-width="1.4"/></svg>
<div style="position:absolute;left:1703px;top:940px;width:9px;height:1.3px;background:#555"></div>
<div style="position:absolute;left:1719px;top:940px;width:125px;height:1px;background:#8a8a8a"></div>
<div style="position:absolute;left:1779px;top:934px;width:6px;height:14px;background:#555;border-radius:1px"></div>
<svg style="position:absolute;left:1849px;top:935px;" width="11" height="11" viewBox="0 0 11 11"><path d="M5.5 0.5v10M0.5 5.5h10" stroke="#333" stroke-width="1.2"/></svg>
<div class="t" style="left:1877.00px;top:935px;font-size:13px;color:#333333;font-weight:400;transform:scaleX(0.8992);transform-origin:0 0;">100%</div>
</body></html>
